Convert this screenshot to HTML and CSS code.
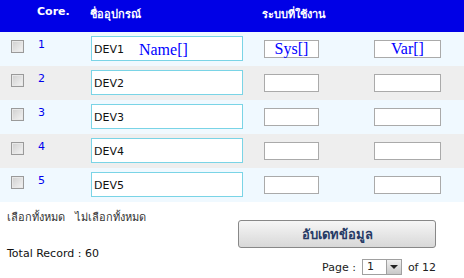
FILE: index.html
```html
<!DOCTYPE html>
<html lang="th">
<head>
  <meta charset="UTF-8" />
  <title>อุปกรณ์</title>
  <link rel="stylesheet" href="styles.css">
</head>
<body>
  <table class="dev-table">
    <colgroup>
      <col class="col-check">
      <col class="col-core">
      <col class="col-name">
      <col class="col-sys">
      <col class="col-var">
    </colgroup>
    <thead>
      <tr>
        <th></th>
        <th class="h-core">Core.</th>
        <th class="h-name">ชื่ออุปกรณ์</th>
        <th class="h-sys" colspan="2">ระบบที่ใช้งาน</th>
      </tr>
    </thead>
    <tbody>
      <tr class="odd">
        <td><input type="checkbox"></td>
        <td class="num">1</td>
        <td><div class="name-box"><span>DEV1</span><span class="tag">Name[]</span></div></td>
        <td><div class="small-box sys-box tag">Sys[]</div></td>
        <td><div class="small-box var-box tag">Var[]</div></td>
      </tr>
      <tr class="even">
        <td><input type="checkbox"></td>
        <td class="num">2</td>
        <td><div class="name-box"><span>DEV2</span></div></td>
        <td><div class="small-box sys-box"></div></td>
        <td><div class="small-box var-box"></div></td>
      </tr>
      <tr class="odd">
        <td><input type="checkbox"></td>
        <td class="num">3</td>
        <td><div class="name-box"><span>DEV3</span></div></td>
        <td><div class="small-box sys-box"></div></td>
        <td><div class="small-box var-box"></div></td>
      </tr>
      <tr class="even">
        <td><input type="checkbox"></td>
        <td class="num">4</td>
        <td><div class="name-box"><span>DEV4</span></div></td>
        <td><div class="small-box sys-box"></div></td>
        <td><div class="small-box var-box"></div></td>
      </tr>
      <tr class="odd">
        <td><input type="checkbox"></td>
        <td class="num">5</td>
        <td><div class="name-box"><span>DEV5</span></div></td>
        <td><div class="small-box sys-box"></div></td>
        <td><div class="small-box var-box"></div></td>
      </tr>
    </tbody>
  </table>

  <div class="footer">
    <div class="footer-left">
      <div class="select-links">
        <a>เลือกทั้งหมด</a>
        <a>ไม่เลือกทั้งหมด</a>
      </div>
      <div class="total">Total Record : 60</div>
    </div>
    <div class="footer-right">
      <button type="button" class="update-btn">อับเดทข้อมูล</button>
      <div class="pager">
        Page :
        <span class="page-select"><span class="page-val">1</span><span class="page-arrow"></span></span>
        of 12
      </div>
    </div>
  </div>
</body>
</html>
```

FILE: styles.css
```css
body {
  margin: 0;
  font-family: "DejaVu Sans", "Noto Sans", sans-serif;
  font-size: 11px;
  color: #222;
  background: #fff;
}

/* ตาราง */
.dev-table {
  width: 464px;
  border-collapse: collapse;
  table-layout: fixed;
}
.col-check { width: 34px; }
.col-core { width: 54px; }
.col-name { width: 172px; }
.col-sys { width: 106px; }
.dev-table th {
  background: #0000e6;
  color: #fff;
  font-weight: bold;
  text-align: left;
  height: 32px;
  padding: 5px 0 0 0;
  vertical-align: top;
  box-sizing: border-box;
}
.h-core { padding-left: 3px !important; }
.h-name { padding-left: 2px !important; }
.h-sys { padding-left: 2px !important; }
.dev-table td {
  height: 34px;
  padding: 0;
  vertical-align: top;
  box-sizing: border-box;
}
.odd td { background: #f0f9ff; }
.even td { background: #eeeeee; }

/* チェックボックス (グレーの古いスタイル) */
.dev-table input[type="checkbox"] {
  appearance: none;
  -webkit-appearance: none;
  margin: 8px 0 0 11px;
  width: 13px;
  height: 13px;
  display: block;
  border: 1px solid #9a9a9a;
  background: linear-gradient(135deg, #cfcfcf, #f4f4f4);
  box-shadow: inset 0 0 0 1px #e8e8e8;
  box-sizing: border-box;
}
.num {
  color: #0000ee;
  padding-top: 6px !important;
  padding-left: 4px !important;
}
.name-box {
  margin: 4px 0 0 3px;
  width: 152px;
  height: 25px;
  border: 1px solid #7ad4e6;
  background: #fff;
  display: flex;
  align-items: center;
  gap: 15px;
  padding: 2px 0 0 2px;
  box-sizing: border-box;
  color: #111;
}
.tag {
  font-family: "Liberation Serif", serif;
  font-size: 16px;
  color: #0000ff;
}
.small-box {
  margin-top: 8px;
  height: 18px;
  border: 1px solid #aaaaaa;
  background: #fff;
  box-sizing: border-box;
  text-align: center;
  line-height: 16px;
}
.sys-box { width: 55px; margin-left: 4px; }
.var-box { width: 67px; margin-left: 8px; }

/* 下部 */
.footer {
  display: flex;
  justify-content: space-between;
  padding: 6px 28px 0 7px;
}
.select-links {
  display: flex;
  gap: 10px;
  color: #333;
}
.total {
  margin-top: 21px;
  color: #111;
}
.footer-right {
  display: flex;
  flex-direction: column;
  align-items: flex-end;
}
.update-btn {
  margin-top: 12px;
  width: 198px;
  height: 28px;
  border: 1px solid #888;
  border-radius: 3px;
  background: linear-gradient(#f6f6f6, #d8d8d8);
  font-family: "DejaVu Sans", "Noto Sans", sans-serif;
  font-size: 13px;
  font-weight: bold;
  color: #263a66;
}
.pager {
  margin-top: 11px;
  display: flex;
  align-items: center;
  gap: 6px;
}
.page-select {
  display: flex;
  width: 40px;
  height: 16px;
  border: 1px solid #a0a0a0;
  box-sizing: border-box;
  background: #fff;
}
.page-val {
  flex: 1;
  padding-left: 4px;
  line-height: 14px;
}
.page-arrow {
  width: 14px;
  background: linear-gradient(#f0f0f0, #c8c8c8);
  border-left: 1px solid #a0a0a0;
  position: relative;
}
.page-arrow::after {
  content: "";
  position: absolute;
  left: 3px;
  top: 5px;
  border-left: 4px solid transparent;
  border-right: 4px solid transparent;
  border-top: 4px solid #222;
}
```
